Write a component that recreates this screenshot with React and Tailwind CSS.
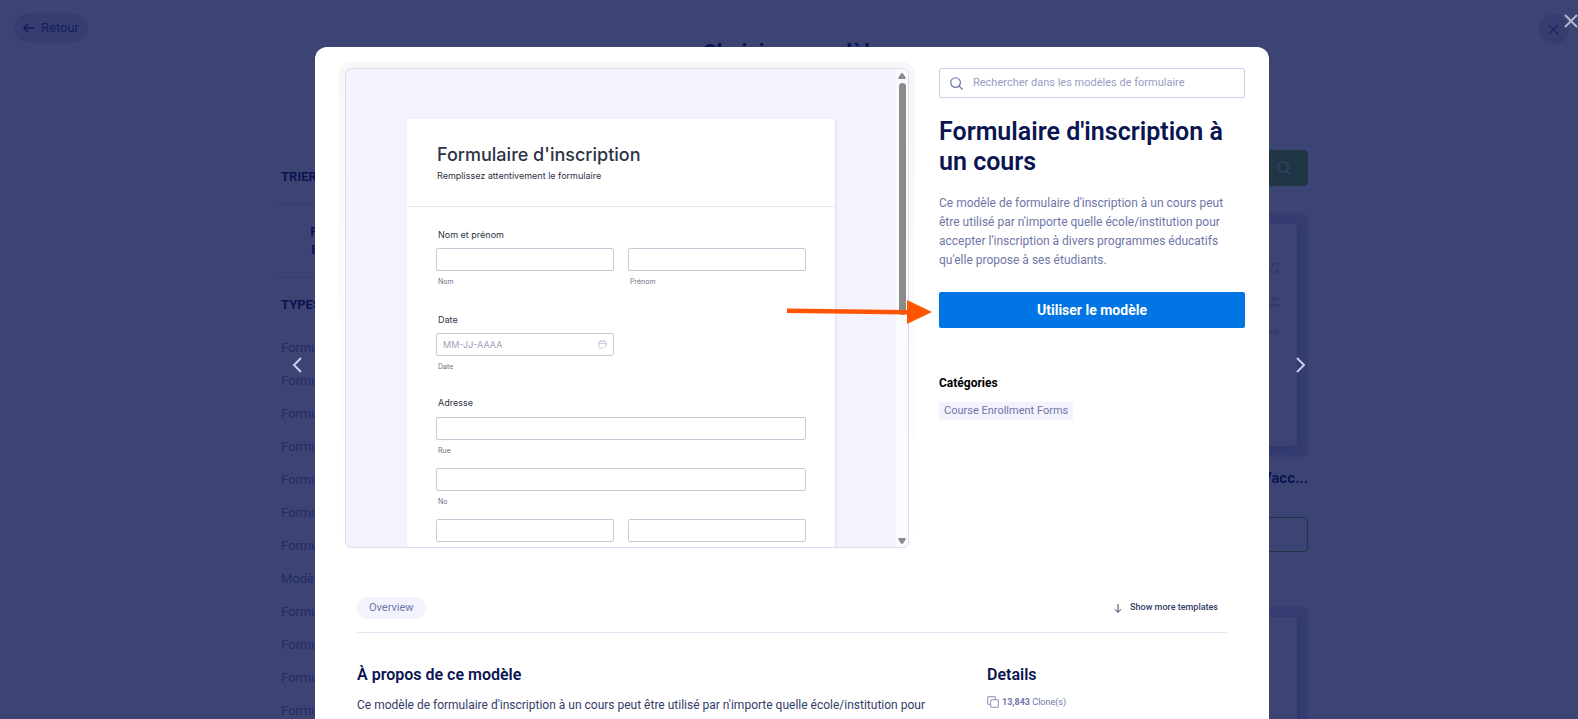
import React from "react";

const TYPES = [
  "Formulaires",
  "Formulaires",
  "Formulaires",
  "Formulaires",
  "Formulaires",
  "Formulaires",
  "Formulaires",
  "Modèles",
  "Formulaires",
  "Formulaires",
  "Formulaires",
  "Formulaires",
];

/* ================= ICONS ================= */
function CloseIcon({ className }) {
  return (
    <svg viewBox="0 0 14 14" className={className} fill="none" stroke="currentColor" strokeWidth="2" aria-hidden="true">
      <path d="M1 1l12 12M13 1L1 13" />
    </svg>
  );
}

function SearchIcon({ className }) {
  return (
    <svg viewBox="0 0 14 14" className={className} fill="none" stroke="currentColor" strokeWidth="1.3" strokeLinecap="round" aria-hidden="true">
      <circle cx="6" cy="6" r="5.2" />
      <path d="M9.8 9.8l3.4 3.4" />
    </svg>
  );
}

/* ================= PAGE BEHIND THE MODAL ================= */
function TemplateCard({ title, children }) {
  return (
    <div className="flex flex-col">
      <div className="h-[244px] rounded-md bg-[#353d71] p-[11px] text-[6px] leading-[7px] text-[#272f63]">
        <div className="flex h-full flex-col items-end gap-5 rounded bg-[#3c4474] pt-9 pr-[18px] text-right shadow-[2px_2px_6px_#2f386c]">
          {children}
        </div>
      </div>
      {title && (
        <>
          <h3 className="mt-[11px] text-right text-[15px] leading-5 font-bold text-[#0b1551]">{title}</h3>
          <button type="button" aria-label="Aperçu" className="mt-[29px] h-[35px] rounded border border-[#213644]" />
        </>
      )}
    </div>
  );
}

function TemplatesPage() {
  return (
    <div className="h-full overflow-hidden">

      <header className="flex items-start justify-between pt-[13px] pr-[9px] pl-[14px]">
        <button type="button" className="flex h-[30px] items-center gap-[6px] rounded-full bg-[#353d71] px-[9px] text-[13px] text-[#161f5b]">
          <svg viewBox="0 0 12 10" className="h-[10px] w-3" fill="none" stroke="currentColor" strokeWidth="1.6" strokeLinecap="round" strokeLinejoin="round" aria-hidden="true">
            <path d="M11 5H1M4.800 1L1 5l3.800 4" />
          </svg>
          Retour
        </button>
        <h1 className="pt-[25px] text-[22px] leading-[30px] font-bold text-[#0b1551]">Choisir un modèle</h1>
        <button type="button" aria-label="Quitter" className="mt-px ml-[43px] flex size-[30px] items-center justify-center rounded-full bg-[#353d71] text-[#202962]">
          <CloseIcon className="size-[11px]" />
        </button>
      </header>

      <div className="mx-auto mt-[82px] flex max-w-[1038px] justify-between pl-[5px]">

        <aside className="w-[160px] text-[#0b1551]">
          <h2 className="pt-[18px] pl-[6px] text-[13px] leading-[18px] font-bold">TRIER PAR</h2>
          <div className="mt-[18px] border-y border-[#333b70] py-[18px] text-center text-[13px] leading-[18px] font-bold">
            <p>PLUS UTILISÉS</p>
            <p>FORMULAIRES</p>
          </div>
          <h2 className="mt-[18px] pl-[6px] text-[13px] leading-[18px] font-bold">TYPES</h2>
          <ul className="mt-[17px] pl-[6px] text-[13px] leading-[33px] text-[#232c65]">
            {TYPES.map((type, i) => (
              <li key={i}>
                <a href="#types">{type}</a>
              </li>
            ))}
          </ul>
        </aside>

        <div className="flex w-[240px] flex-col">
          <button type="button" aria-label="Rechercher" className="flex h-9 w-12 items-center justify-center self-end rounded-r bg-[#213644] text-[#34406f]">
            <SearchIcon className="size-[14px]" />
          </button>
          <div className="mt-[27px] flex flex-col gap-[54px]">
            <TemplateCard title="Formulaire de Vacc...">
              <p>il y a<br />avant, le</p>
              <p>les<br />avoir</p>
              <p>et le</p>
            </TemplateCard>
            <TemplateCard />
          </div>
        </div>

      </div>
    </div>
  );
}

/* ================= FORM PREVIEW ================= */
function Field({ id, sub, placeholder, label }) {
  return (
    <div className="flex min-w-0 flex-1 flex-col">
      <div className="flex h-[23px] items-center rounded-xs border border-[#c7c9d9] bg-white px-[6px]">
        <input
          id={id}
          type="text"
          aria-label={label}
          placeholder={placeholder}
          className="w-full min-w-0 text-[9px] leading-4 outline-none placeholder:text-[#9ea1b5]"
        />
        {placeholder && (
          <svg viewBox="0 0 10 10" className="size-[9px] shrink-0" fill="none" stroke="#c0c3d6" strokeWidth="1" aria-hidden="true">
            <path d="M6 9H2a1 1 0 0 1-1-1V2.500a1 1 0 0 1 1-1h6a1 1 0 0 1 1 1V6.500M1 4h8M3 0v2M7 0v2M6.500 8.500l2.500-2" />
          </svg>
        )}
      </div>
      {sub && (
        <label htmlFor={id} className="mt-[6px] mb-px pl-[2px] text-[7px] leading-[10px] text-[#6c7086]">{sub}</label>
      )}
    </div>
  );
}

function FormPreview() {
  return (
    <div className="-m-[6px] min-w-0 flex-1 rounded-xl bg-linear-to-b from-[#f7f7f7] to-white p-[6px]">
      <div className="flex h-[480px] overflow-hidden rounded-md border border-[#d9dcf3] bg-[#f3f3fe] font-['Inter',sans-serif]">

        <div className="min-w-0 flex-1 pt-[50px]">
          <form className="mx-auto min-h-full w-[428px] max-w-full rounded-xs bg-white text-[#2c3345] shadow-[1px_1px_2px_#dcdeee]">

            <div className="border-b border-[#e6e7f2] px-[30px] pt-6 pb-[26px]">
              <h2 className="text-lg leading-6 font-medium">Formulaire d'inscription</h2>
              <p className="mt-1 text-[9px] leading-[9px]">Remplissez attentivement le formulaire</p>
            </div>

            <div className="flex flex-col px-[29px] pt-[22px]">
              <h3 className="pl-[2px] text-[9px] leading-3">Nom et prénom</h3>
              <div className="mt-[7px] flex gap-[14px]">
                <Field id="nom" sub="Nom" />
                <Field id="prenom" sub="Prénom" />
              </div>

              <h3 className="mt-[26px] pl-[2px] text-[9px] leading-3">Date</h3>
              <div className="mt-[7px] flex w-1/2 pr-[7px]">
                <Field id="date" sub="Date" placeholder="MM-JJ-AAAA" />
              </div>

              <h3 className="mt-6 pl-[2px] text-[9px] leading-3">Adresse</h3>
              <div className="mt-2 flex flex-col gap-[11px]">
                <Field id="rue" sub="Rue" />
                <Field id="numero" sub="No" />
                <div className="flex gap-[14px]">
                  <Field id="ville" label="Ville" />
                  <Field id="region" label="Région" />
                </div>
              </div>
            </div>

          </form>
        </div>

        {/* scrollbar */}
        <div className="flex w-3 flex-col items-center bg-[#fbfbfd] pt-1 pb-[3px]">
          <svg viewBox="0 0 8 6" className="h-[6px] w-2" fill="#8b8b8b" aria-hidden="true">
            <path d="M3 .6L.4 4.600Q0 6 1 6h6q1 0 .6-1.400L5 .6q-1-1.200-2 0z" />
          </svg>
          <div className="mt-1 h-[232px] w-[7px] rounded-full bg-[#8b8b8b]" />
          <svg viewBox="0 0 8 6" className="mt-auto h-[6px] w-2" fill="#8b8b8b" aria-hidden="true">
            <path d="M3 5.400L.4 1.400Q0 0 1 0h6q1 0 .6 1.400L5 5.400q-1 1.200-2 0z" />
          </svg>
        </div>

      </div>
    </div>
  );
}

/* ================= MODAL ================= */
function TemplateModal() {
  return (
    <div role="dialog" aria-label="Formulaire d'inscription à un cours" className="mt-[47px] w-full max-w-[954px] self-stretch overflow-hidden rounded-t-xl bg-white">

      <div className="flex gap-[30px] pt-[21px] pr-6 pl-[30px]">
        <FormPreview />

        <div className="flex w-[306px] shrink-0 flex-col">
          <label className="flex h-[30px] items-center gap-[10px] rounded-xs border border-[#c8ceed] px-[10px] text-[#6f76a7]">
            <SearchIcon className="size-[13px] shrink-0" />
            <input
              type="text"
              aria-label="Rechercher"
              placeholder="Rechercher dans les modèles de formulaire"
              className="w-full text-[11px] outline-none placeholder:text-[#979dc6]"
            />
          </label>

          <h2 className="mt-[19px] pr-4 text-[25px] leading-[30px] font-semibold text-[#0a1551]">Formulaire d'inscription à un cours</h2>

          <p className="mt-[17px] pr-3 text-xs leading-[19px] text-[#6f76a7]">
            Ce modèle de formulaire d'inscription à un cours peut être utilisé par n'importe quelle école/institution pour accepter l'inscription à divers programmes éducatifs qu'elle propose à ses étudiants.
          </p>

          <button type="button" className="mt-[22px] h-9 rounded-xs bg-[#0075e3] text-sm font-bold text-white">
            Utiliser le modèle
          </button>

          <h3 className="mt-[46px] text-xs leading-[18px] font-bold text-black">Catégories</h3>
          <a href="#categories" className="mt-[10px] self-start rounded-xs bg-[#f3f3fe] px-[5px] text-[11px] leading-[18px] text-[#6f76a7]">
            Course Enrollment Forms
          </a>
        </div>
      </div>

      <div className="mx-[42px] mt-[49px] flex items-center justify-between border-b border-[#e3e5f5] pb-[13px]">
        <a href="#overview" className="rounded-full bg-[#f3f3fe] px-3 text-[11px] leading-[22px] text-[#6f76a7]">Overview</a>
        <a href="#more" className="flex items-center gap-2 pr-[9px] text-[9px] font-medium text-[#343c6a]">
          <svg viewBox="0 0 8 9" className="h-[9px] w-2" fill="none" stroke="currentColor" strokeWidth="1" strokeLinecap="round" aria-hidden="true">
            <path d="M4 .5v7.500M1 5.500l3 2.700 3-2.700" />
          </svg>
          Show more templates
        </a>
      </div>

      <div className="mx-[42px] flex gap-10 pt-8">
        <section className="w-[590px]">
          <h3 className="text-base leading-5 font-semibold text-[#0a1551]">À propos de ce modèle</h3>
          <p className="mt-[11px] text-xs leading-[19px] text-[#343c6a]">
            Ce modèle de formulaire d'inscription à un cours peut être utilisé par n'importe quelle école/institution pour
          </p>
        </section>
        <section>
          <h3 className="text-base leading-5 font-semibold text-[#0a1551]">Details</h3>
          <p className="mt-[9px] flex items-center gap-[3px] text-[9px] leading-4 text-[#6f76a7]">
            <svg viewBox="0 0 12 12" className="size-3" fill="none" stroke="#9da2c6" strokeWidth="1.200" aria-hidden="true">
              <rect x="3.600" y="3.600" width="7.800" height="7.800" rx="1.500" />
              <path d="M3.600 8.400H1.800a1.200 1.200 0 0 1-1.200-1.200V1.800A1.200 1.200 0 0 1 1.800.6h5.400a1.200 1.200 0 0 1 1.200 1.200v1.800" />
            </svg>
            <span><b>13,843</b> Clone(s)</span>
          </p>
        </section>
      </div>

    </div>
  );
}

function App() {
  return (
    <div className="relative h-screen overflow-hidden bg-[#3c4474] font-['Roboto',sans-serif]">

      <TemplatesPage />

      <div className="absolute inset-0 flex items-center justify-center overflow-hidden pl-[6px]">
        <button type="button" aria-label="Précédent" className="mt-[10px] flex h-9 w-16 shrink-0 items-center justify-end pr-[13px] text-[#c8ceed]">
          <svg viewBox="0 0 10 16" className="h-4 w-[10px]" fill="none" stroke="currentColor" strokeWidth="2" aria-hidden="true">
            <path d="M9 1L2 8l7 7" />
          </svg>
        </button>
        <TemplateModal />
        <button type="button" aria-label="Suivant" className="mt-[10px] flex h-9 w-16 shrink-0 items-center justify-center text-[#c8ceed]">
          <svg viewBox="0 0 10 16" className="h-4 w-[10px]" fill="none" stroke="currentColor" strokeWidth="2" aria-hidden="true">
            <path d="M1 1l7 7-7 7" />
          </svg>
        </button>

        <button type="button" aria-label="Fermer" className="absolute top-[14px] right-0 text-[#b4b8cd]">
          <CloseIcon className="size-[14px]" />
        </button>

        {/* pointer towards the main button */}
        <svg viewBox="0 0 146 26" className="absolute top-[299px] left-[787px] h-[26px] w-[146px]" fill="#ff5500" aria-hidden="true">
          <path d="M0 9.500l120 1.500V1l25 12-25 12V15.500L0 14z" />
        </svg>
      </div>

    </div>
  );
}

export default App;
